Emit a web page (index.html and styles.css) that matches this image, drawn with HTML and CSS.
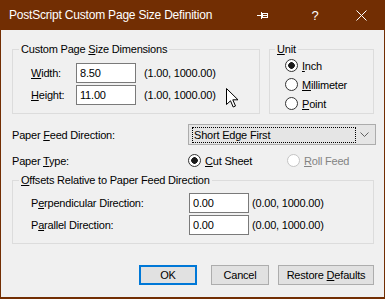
FILE: index.html
```html
<!DOCTYPE html>
<html lang="en">
<head>
    <meta charset="UTF-8">
    <meta name="viewport" content="width=device-width, initial-scale=1.0">
    <title>PostScript Custom Page Size Definition</title>
    <link rel="stylesheet" href="styles.css">
</head>
<body>
<div class="window">
    <div class="titlebar">
        <span class="title">PostScript Custom Page Size Definition</span>
        <span class="cap-btn pin">
            <svg width="11" height="7" viewBox="0 0 11 7"><path d="M0 3.5H4" stroke="#fff"/><rect x="4" y="0" width="1" height="7" fill="#fff"/><rect x="5.5" y="1.5" width="5" height="4" fill="none" stroke="#fff"/><path d="M5 3.5H10" stroke="#fff"/></svg>
        </span>
        <span class="cap-btn help">?</span>
        <span class="cap-btn close">
            <svg width="11" height="11" viewBox="0 0 11 11"><path d="M0.5 0.5L10.5 10.5M10.5 0.5L0.5 10.5" stroke="#fff"/></svg>
        </span>
    </div>

    <div class="content">
        <div class="top-row">
            <fieldset class="group dims">
                <legend>Custom Page <u>S</u>ize Dimensions</legend>
                <div class="field-row">
                    <label class="field-label"><u>W</u>idth:</label>
                    <input class="num" type="text" value="8.50">
                    <span class="range">(1.00, 1000.00)</span>
                </div>
                <div class="field-row">
                    <label class="field-label"><u>H</u>eight:</label>
                    <input class="num" type="text" value="11.00">
                    <span class="range">(1.00, 1000.00)</span>
                </div>
            </fieldset>

            <fieldset class="group unit">
                <legend><u>U</u>nit</legend>
                <label class="opt"><input class="radio" type="radio" name="unit" checked><span><u>I</u>nch</span></label>
                <label class="opt"><input class="radio" type="radio" name="unit"><span><u>M</u>illimeter</span></label>
                <label class="opt"><input class="radio" type="radio" name="unit"><span><u>P</u>oint</span></label>
            </fieldset>
        </div>

        <div class="form-row feed">
            <span>Paper <u>F</u>eed Direction:</span>
            <div class="combo">
                <span class="combo-text">Short Edge First</span>
                <svg class="chev" width="9" height="5" viewBox="0 0 9 5"><path d="M0.5 0.5L4.5 4.5L8.5 0.5" fill="none" stroke="#606060"/></svg>
            </div>
        </div>

        <div class="form-row type">
            <span>Paper <u>T</u>ype:</span>
            <div class="opt-group">
                <label class="opt cut"><input class="radio" type="radio" name="ptype" checked><span><u>C</u>ut Sheet</span></label>
                <label class="opt disabled"><input class="radio" type="radio" name="ptype" disabled><span><u>R</u>oll Feed</span></label>
            </div>
        </div>

        <fieldset class="group offsets">
            <legend><u>O</u>ffsets Relative to Paper Feed Direction</legend>
            <div class="field-row">
                <label class="field-label">P<u>e</u>rpendicular Direction:</label>
                <input class="num" type="text" value="0.00">
                <span class="range">(0.00, 1000.00)</span>
            </div>
            <div class="field-row">
                <label class="field-label">P<u>a</u>rallel Direction:</label>
                <input class="num" type="text" value="0.00">
                <span class="range">(0.00, 1000.00)</span>
            </div>
        </fieldset>

        <div class="buttons">
            <button class="btn default">OK</button>
            <button class="btn cancel">Cancel</button>
            <button class="btn restore">Restore <u>D</u>efaults</button>
        </div>
    </div>

    <svg class="pointer" width="13" height="20" viewBox="0 0 13 20"><path d="M0.5 0.5V16.5L4.5 12.8L7.2 19L9.5 18L6.8 11.8H12Z" fill="#fff" stroke="#000"/></svg>
</div>
</body>
</html>
```

FILE: styles.css
```css
* {
    box-sizing: border-box;
}
body {
    margin: 0;
    font-family: "Liberation Sans", Arial, sans-serif;
    font-size: 11px;
    letter-spacing: -0.2px;
    color: #000;
}
.window {
    position: relative;
    width: 385px;
    height: 299px;
    background: #f0f0f0;
    border: 1px solid #722e03;
    border-top: 0;
    border-bottom-width: 2px;
}
.titlebar {
    display: flex;
    height: 30px;
    background: #722e03;
    color: #fff;
    padding-left: 8px;
}
.title {
    flex: 1;
    font-size: 12px;
    line-height: 30px;
}
.cap-btn {
    width: 46px;
    height: 30px;
    display: flex;
    align-items: center;
    justify-content: center;
}
.help {
    margin-left: 7px;
    font-size: 13px;
}
.content {
    padding: 12px 10px 0 11px;
}
.top-row {
    display: flex;
    gap: 9px;
}
.group {
    margin: 0;
    border: 1px solid #dcdcdc;
    padding: 0 0 0 6px;
}
.group legend {
    padding: 0 2px;
    line-height: 14px;
}
.dims {
    width: 248px;
    padding-top: 7px;
    padding-bottom: 8px;
}
.unit {
    width: 105px;
    padding-left: 5px;
}
.field-row {
    display: flex;
    align-items: center;
    height: 20px;
    margin-left: 12px;
}
.field-row + .field-row {
    margin-top: 2px;
}
.field-label {
    width: 45px;
}
.num {
    width: 60px;
    height: 20px;
    border: 1px solid #7a7a7a;
    background: #fff;
    padding: 0 3px;
    font: inherit;
    letter-spacing: inherit;
    color: #000;
}
.range {
    margin-left: 8px;
}
.opt {
    display: flex;
    align-items: center;
    height: 19px;
}
.unit .opt {
    margin-left: 10px;
}
.radio {
    appearance: none;
    width: 13px;
    height: 13px;
    margin: 0 4px 0 0;
    border: 1px solid #333;
    border-radius: 50%;
    background: #fff;
}
.radio:checked {
    background: radial-gradient(circle, #1a1a1a 3px, #fff 3.6px);
}
.disabled {
    color: #838383;
}
.disabled .radio {
    border-color: #c4c4c4;
}
.form-row {
    display: grid;
    grid-template-columns: 176px 1fr;
    align-items: center;
}
.feed {
    margin-top: 10px;
}
.combo {
    display: flex;
    align-items: center;
    height: 21px;
    margin-right: -2px;
    border: 1px solid #acacac;
    background: #e5e5e5;
    padding: 0 0 0 3px;
}
.combo-text {
    width: 164px;
    height: 16px;
    border: 1px dotted #000;
    padding-left: 1px;
    line-height: 14px;
}
.chev {
    margin-left: 4px;
}
.type {
    margin-top: 6px;
    height: 18px;
}
.opt-group {
    display: flex;
}
.opt.cut {
    width: 99px;
}
.offsets {
    margin-top: 4px;
    padding-top: 6px;
    padding-bottom: 8px;
}
.offsets .field-label {
    width: 158px;
}
.offsets .range {
    margin-left: 3px;
}
.buttons {
    display: flex;
    justify-content: flex-end;
    margin-top: 21px;
}
.btn {
    height: 20px;
    border: 1px solid #adadad;
    background: #e1e1e1;
    padding: 0;
    font: inherit;
    letter-spacing: inherit;
    color: #000;
}
.btn.default {
    width: 58px;
    margin-right: 14px;
    border: 2px solid #0078d7;
}
.btn.cancel {
    width: 58px;
    margin-right: 9px;
}
.btn.restore {
    width: 96px;
}
.pointer {
    position: absolute;
    left: 225px;
    top: 88px;
}
```
